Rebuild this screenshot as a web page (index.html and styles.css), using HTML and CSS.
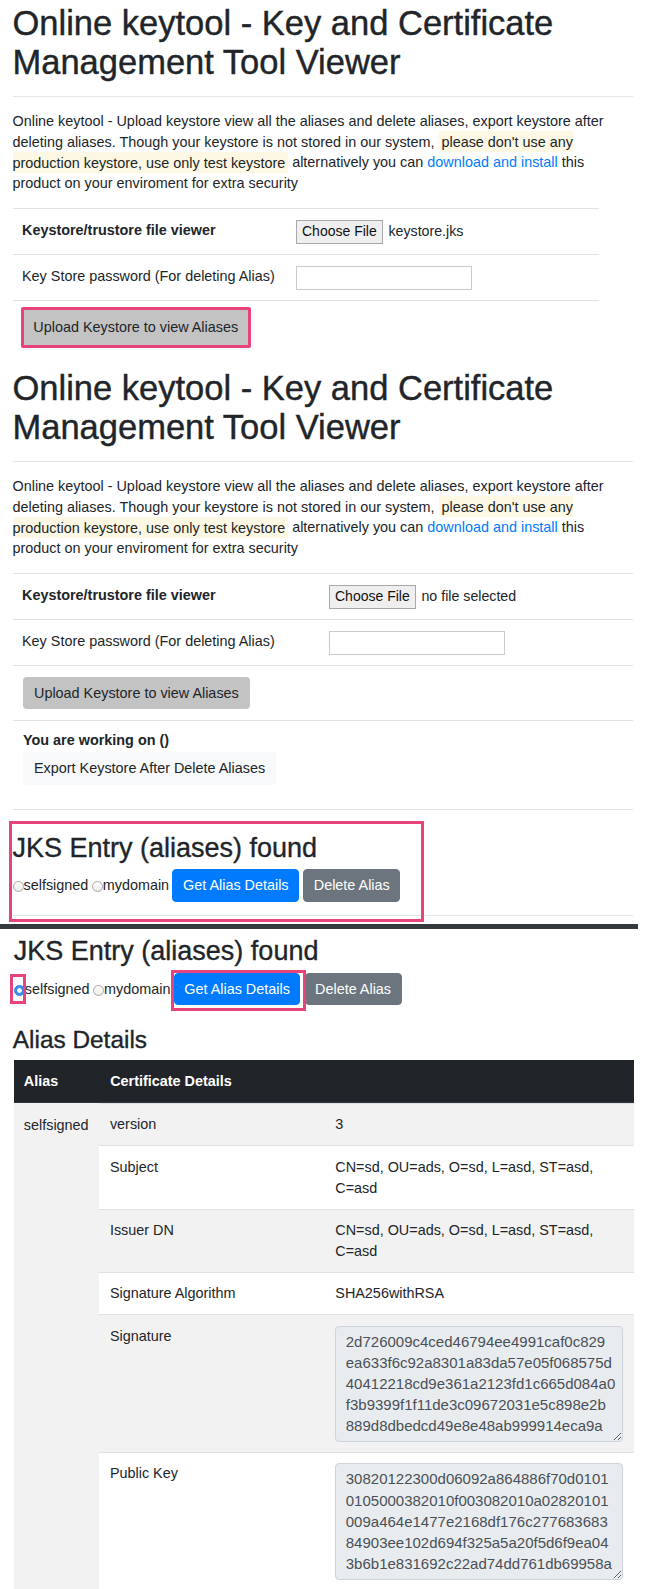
FILE: index.html
```html
<!DOCTYPE html>
<html lang="en">
<head>
<meta charset="utf-8">
<title>Online keytool - Key and Certificate Management Tool Viewer</title>
<link rel="stylesheet" href="styles.css">
</head>
<body>
<div class="page">

  <section class="shot shot--intro">
    <div class="wrap">
      <h1 class="title">Online keytool - Key and Certificate Management Tool Viewer</h1>
      <hr class="rule rule--top">
      <p class="intro">Online keytool - Upload keystore view all the aliases and delete aliases, export keystore after deleting aliases. Though your keystore is not stored in our system, <mark class="warn">please don't use any production keystore, use only test keystore</mark> alternatively you can <a class="link" href="#">download and install</a> this product on your enviroment for extra security</p>
      <table class="form-table form-table--narrow">
        <colgroup><col class="col-label-narrow"><col></colgroup>
        <tr>
          <td class="label label--bold">Keystore/trustore file viewer</td>
          <td><div class="file-field"><span class="file-btn">Choose File</span><span class="file-name">keystore.jks</span></div></td>
        </tr>
        <tr>
          <td class="label">Key Store password (For deleting Alias)</td>
          <td><input class="pw" type="password"></td>
        </tr>
        <tr>
          <td class="cell-action" colspan="2"><button class="btn-upload btn-upload--annotated" type="button">Upload Keystore to view Aliases</button></td>
        </tr>
      </table>
    </div>
  </section>

  <section class="shot shot--upload">
    <div class="wrap">
      <h1 class="title">Online keytool - Key and Certificate Management Tool Viewer</h1>
      <hr class="rule rule--top">
      <p class="intro">Online keytool - Upload keystore view all the aliases and delete aliases, export keystore after deleting aliases. Though your keystore is not stored in our system, <mark class="warn">please don't use any production keystore, use only test keystore</mark> alternatively you can <a class="link" href="#">download and install</a> this product on your enviroment for extra security</p>
      <table class="form-table form-table--wide">
        <colgroup><col class="col-label-wide"><col></colgroup>
        <tr>
          <td class="label label--bold">Keystore/trustore file viewer</td>
          <td><div class="file-field"><span class="file-btn">Choose File</span><span class="file-name">no file selected</span></div></td>
        </tr>
        <tr>
          <td class="label">Key Store password (For deleting Alias)</td>
          <td><input class="pw" type="password"></td>
        </tr>
        <tr>
          <td colspan="2"><button class="btn-upload" type="button">Upload Keystore to view Aliases</button></td>
        </tr>
        <tr>
          <td class="cell-working" colspan="2">
            <div class="working">You are working on ()</div>
            <button class="btn-export" type="button">Export Keystore After Delete Aliases</button>
          </td>
        </tr>
      </table>
    </div>
  </section>

  <section class="shot shot--aliases">
    <div class="wrap">
      <h2 class="entries-title">JKS Entry (aliases) found</h2>
      <div class="alias-pick">
        <span class="radio"></span><span class="radio-text">selfsigned</span>
        <span class="radio radio--second"></span><span class="radio-text">mydomain</span>
        <button class="btn btn-primary" type="button">Get Alias Details</button>
        <button class="btn btn-secondary" type="button">Delete Alias</button>
      </div>
      <hr class="rule rule--entries">
    </div>
    <div class="annot annot--entries"></div>
  </section>

  <div class="divider"></div>

  <section class="shot shot--details">
    <div class="wrap wrap--shift">
      <h2 class="entries-title">JKS Entry (aliases) found</h2>
      <div class="alias-pick">
        <span class="radio radio--checked"></span><span class="radio-text">selfsigned</span>
        <span class="radio radio--second"></span><span class="radio-text">mydomain</span>
        <button class="btn btn-primary" type="button">Get Alias Details</button>
        <button class="btn btn-secondary" type="button">Delete Alias</button>
      </div>
      <h3 class="details-title">Alias Details</h3>
      <table class="alias-table">
        <colgroup><col class="col-alias"><col></colgroup>
        <thead>
          <tr><th>Alias</th><th>Certificate Details</th></tr>
        </thead>
        <tbody>
          <tr>
            <td class="alias-name">selfsigned</td>
            <td class="alias-detail">
              <table class="cert-table">
                <colgroup><col class="col-key"><col></colgroup>
                <tr><td>version</td><td>3</td></tr>
                <tr><td>Subject</td><td>CN=sd, OU=ads, O=sd, L=asd, ST=asd, C=asd</td></tr>
                <tr><td>Issuer DN</td><td>CN=sd, OU=ads, O=sd, L=asd, ST=asd, C=asd</td></tr>
                <tr><td>Signature Algorithm</td><td>SHA256withRSA</td></tr>
                <tr><td>Signature</td><td><textarea class="hex" readonly wrap="off">2d726009c4ced46794ee4991caf0c829
ea633f6c92a8301a83da57e05f068575d
40412218cd9e361a2123fd1c665d084a0
f3b9399f1f11de3c09672031e5c898e2b
889d8dbedcd49e8e48ab999914eca9a</textarea></td></tr>
                <tr><td>Public Key</td><td><textarea class="hex" readonly wrap="off">30820122300d06092a864886f70d0101
0105000382010f003082010a02820101
009a464e1477e2168df176c277683683
84903ee102d694f325a5a20f5d6f9ea04
3b6b1e831692c22ad74dd761db69958a</textarea></td></tr>
              </table>
            </td>
          </tr>
        </tbody>
      </table>
    </div>
    <div class="annot annot--radio"></div>
    <div class="annot annot--get"></div>
  </section>

</div>
</body>
</html>
```

FILE: styles.css
```css
* { box-sizing: border-box; }

html, body {
  margin: 0;
  padding: 0;
  background: #fff;
}

body {
  font-family: "Liberation Sans", Arial, sans-serif;
  font-size: 14.4px;
  line-height: 20.8px;
  color: #212529;
}

.page {
  width: 655px;
  height: 1589px;
  overflow: hidden;
}

.shot {
  position: relative;
  overflow: hidden;
}

.shot--intro { height: 365px; }
.shot--upload { height: 447px; }
.shot--aliases { height: 112px; padding-top: 19.6px; }
.shot--details { height: 660px; padding-top: 5.9px; }

.divider {
  width: 638px;
  height: 5px;
  background: #36393d;
}

.wrap {
  margin-left: 12.5px;
  width: 620px;
}

.wrap--shift { margin-left: 13.8px; }

/* headings */
.title {
  margin: 4px 0 0;
  font-size: 34.5px;
  line-height: 39px;
  font-weight: 400;
  -webkit-text-stroke: 0.4px #212529;
}

.entries-title {
  margin: 0 0 5.3px;
  font-size: 27px;
  line-height: 32.4px;
  font-weight: 400;
  -webkit-text-stroke: 0.35px #212529;
}

.details-title {
  margin: 20px 0 5.9px;
  margin-left: -1px;
  font-size: 24.4px;
  line-height: 28.8px;
  font-weight: 400;
  -webkit-text-stroke: 0.35px #212529;
}

.rule {
  height: 0;
  border: 0;
  border-top: 1px solid rgba(0, 0, 0, 0.1);
}

.rule--top { margin: 13.8px 0 14px; }
.rule--entries { margin: 13px 0 0; }

.intro { margin: 0 0 14.3px; }

.warn {
  background: #fcf8e3;
  color: inherit;
  padding: 0.2em;
}

.link {
  color: #007bff;
  text-decoration: none;
}

/* upload form table */
.form-table {
  border-collapse: collapse;
  table-layout: fixed;
}

.form-table--narrow { width: 586.5px; }
.form-table--wide { width: 620px; }

.col-label-narrow { width: 272.7px; }
.col-label-wide { width: 305.7px; }

.form-table td {
  border-top: 1px solid #dee2e6;
  padding: 10.5px 10px 10.5px 10.5px;
  vertical-align: top;
}

.form-table--wide tr:last-child td { border-bottom: 1px solid #dee2e6; }

.label {
  white-space: nowrap;
  padding-left: 9.5px !important;
}

.label--bold { font-weight: 700; }

.file-field {
  display: flex;
  align-items: center;
  height: 24px;
}

.file-btn {
  display: inline-flex;
  align-items: center;
  height: 24px;
  padding: 0 5.3px;
  border: 1px solid #a9a9a9;
  background: #efefef;
  font-size: 14px;
  color: #111;
}

.file-name {
  margin-left: 5.5px;
  font-size: 14.2px;
}

.pw {
  display: block;
  width: 176.5px;
  height: 24px;
  margin: 0;
  border: 1px solid #cbcbcb;
  background: #fff;
  padding: 0 4px;
}

.btn-upload {
  display: inline-flex;
  align-items: center;
  justify-content: center;
  height: 32.7px;
  padding: 0 11px;
  margin: 0;
  border: 0;
  border-radius: 4px;
  background: #c3c3c3;
  color: #212529;
  font-family: inherit;
  font-size: 14.4px;
  line-height: 20.8px;
}

.btn-upload--annotated {
  width: 229.5px;
  height: 41px;
  margin: -5.1px 0 0 -2px;
  padding: 0;
  border: 3px solid #e8437b;
  border-radius: 2px;
}

.cell-working { padding-top: 9.3px !important; padding-bottom: 24px !important; }

.working {
  font-weight: 700;
  margin-bottom: 1.3px;
}

.btn-export {
  display: inline-flex;
  align-items: center;
  height: 32.6px;
  padding: 0 11px;
  margin: 0;
  border: 0;
  border-radius: 4px;
  background: #f8f9fa;
  color: #212529;
  font-family: inherit;
  font-size: 14.4px;
  line-height: 20.8px;
}

/* alias picker */
.alias-pick {
  display: flex;
  align-items: center;
  height: 33px;
}

.radio {
  flex: none;
  width: 11px;
  height: 11px;
  margin-top: 2px;
  border-radius: 50%;
  border: 1px solid #a8a8a8;
  background: linear-gradient(#fdfdfd, #ececec);
}

.radio--second { margin-left: 3.4px; }

.radio--checked {
  border-color: #2a7fe8;
  background: radial-gradient(circle, #fff 0 2px, #3a8ff5 2.5px);
}

.radio-text { white-space: nowrap; }

.btn {
  display: inline-flex;
  align-items: center;
  justify-content: center;
  height: 32.7px;
  padding: 0 9.5px;
  margin: 0;
  border: 1px solid transparent;
  border-radius: 4px;
  color: #fff;
  font-family: inherit;
  font-size: 14.4px;
  line-height: 20.8px;
  white-space: nowrap;
}

.btn-primary {
  margin-left: 3.4px;
  background: #007bff;
  border-color: #007bff;
}

.btn-secondary {
  margin-left: 4.2px;
  background: #6c757d;
  border-color: #6c757d;
}

/* annotations drawn over the screenshots */
.annot {
  position: absolute;
  border: 3px solid #e8437b;
  pointer-events: none;
}

.annot--entries { left: 9.2px; top: 8.7px; width: 414.6px; height: 101.3px; }
.annot--radio { left: 9.5px; top: 45px; width: 16.5px; height: 30px; }
.annot--get { left: 171.2px; top: 41px; width: 134.4px; height: 41px; }

/* alias details table */
.alias-table {
  width: 620px;
  border-collapse: collapse;
  table-layout: fixed;
}

.col-alias { width: 85.6px; }

.alias-table th {
  background: #212529;
  color: #fff;
  font-weight: 700;
  text-align: left;
  padding: 10.5px 10px;
  border-bottom: 1px solid #32383e;
}

.alias-table th + th { padding-left: 10.8px; }

.alias-name {
  background: #f2f2f2;
  vertical-align: top;
  padding: 11.5px 10px 10px;
}

.alias-detail {
  padding: 0;
  vertical-align: top;
}

.cert-table {
  width: 100%;
  border-collapse: collapse;
  table-layout: fixed;
  background: #fff;
}

.col-key { width: 225.4px; }

.cert-table td {
  border-top: 1px solid #dee2e6;
  padding: 10.3px 10.5px;
  vertical-align: top;
}

.cert-table tr:nth-child(odd) td { background: #f2f2f2; }

.hex {
  display: block;
  width: 288px;
  height: 116.3px;
  margin: 0;
  padding: 4px 9.5px 0;
  border: 1px solid #ced4da;
  border-radius: 4px;
  background: #e9ecef;
  color: #495057;
  font-family: "Liberation Sans", Arial, sans-serif;
  font-size: 15px;
  line-height: 21.1px;
  white-space: pre;
  overflow: hidden;
  resize: both;
}
```
